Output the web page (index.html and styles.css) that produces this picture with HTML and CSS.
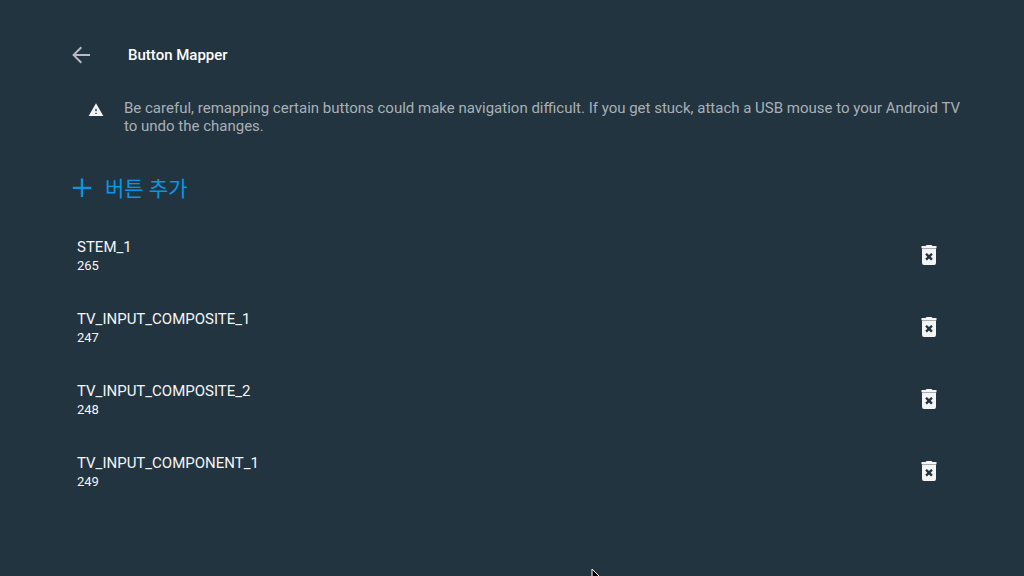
FILE: index.html
```
<!DOCTYPE html>
<html lang="ko">
<head>
    <meta charset="UTF-8">
    <meta name="viewport" content="width=device-width, initial-scale=1.0">
    <link rel="stylesheet" href="styles.css">
    <title>Button Mapper</title>
</head>
<body>
    <header class="top-bar">
        <button class="icon-button" aria-label="Back">
            <svg width="24" height="24" viewBox="0 0 24 24"><path d="M21 11H7l6-6-1.400-1.400L3.200 12l8.400 8.400L13 19l-6-6h14z"/></svg>
        </button>
        <h1>Button Mapper</h1>
    </header>
    <main>
        <div class="warning">
            <svg width="16" height="16" viewBox="0 0 24 24"><path d="M1 21h22L12 2 1 21zm12-3h-2v-2h2v2zm0-4h-2v-4h2v4z"/></svg>
            <p>Be careful, remapping certain buttons could make navigation difficult. If you get stuck, attach a USB mouse to your Android TV to undo the changes.</p>
        </div>
        <button class="add-button">
            <svg width="20" height="20" viewBox="0 0 20 20"><path d="M8.800 1.600h2.200v8.200h8.200V12H11v8H8.800v-8H.8V9.800h8z"/></svg>
            <span>버튼 추가</span>
        </button>
        <ul class="button-list">
            <li>
                <div>
                    <h2>STEM_1</h2>
                    <p>265</p>
                </div>
                <button class="icon-button" aria-label="Delete STEM_1">
                    <svg width="24" height="24" viewBox="0 0 24 24"><use href="#trash"/></svg>
                </button>
            </li>
            <li>
                <div>
                    <h2>TV_INPUT_COMPOSITE_1</h2>
                    <p>247</p>
                </div>
                <button class="icon-button" aria-label="Delete TV_INPUT_COMPOSITE_1">
                    <svg width="24" height="24" viewBox="0 0 24 24"><use href="#trash"/></svg>
                </button>
            </li>
            <li>
                <div>
                    <h2>TV_INPUT_COMPOSITE_2</h2>
                    <p>248</p>
                </div>
                <button class="icon-button" aria-label="Delete TV_INPUT_COMPOSITE_2">
                    <svg width="24" height="24" viewBox="0 0 24 24"><use href="#trash"/></svg>
                </button>
            </li>
            <li>
                <div>
                    <h2>TV_INPUT_COMPONENT_1</h2>
                    <p>249</p>
                </div>
                <button class="icon-button" aria-label="Delete TV_INPUT_COMPONENT_1">
                    <svg width="24" height="24" viewBox="0 0 24 24"><use href="#trash"/></svg>
                </button>
            </li>
        </ul>
    </main>
    <!-- Mouse pointer -->
    <svg class="pointer" width="12" height="18" viewBox="0 0 12 18"><path d="M1 1v14l3-3 2 5 2-1-2-5h5z"/></svg>
    <!-- Shared trash icon -->
    <svg width="0" height="0" class="icons">
        <symbol id="trash" viewBox="0 0 24 24">
            <path fill-rule="evenodd" d="M5 4.400V19a2 2 0 0 0 2 2h10a2 2 0 0 0 2-2V4.400H5zm3.200 6.200 1.700-1.700 2.100 2.100 2.100-2.100 1.700 1.700-2.100 2.100 2.100 2.100-1.700 1.700-2.100-2.100-2.100 2.100-1.700-1.700 2.100-2.100z"/>
            <path d="M15.500 2l-1-1h-5l-1 1h-4v2.200h15V2z"/>
        </symbol>
    </svg>
</body>
</html>
```
FILE: styles.css
```
body {
    font-family: Roboto, "Noto Sans CJK KR", sans-serif;
    background-color: #233441;
    color: #f4f5f6;
    min-height: 100vh;
    margin: 0;
    padding: 40px 64px 0 69px;
    box-sizing: border-box;
    overflow: hidden;
}

h1, h2, p {
    margin: 0;
}

svg {
    display: block;
    flex-shrink: 0;
    fill: currentColor;
}

button {
    background: none;
    border: none;
    padding: 0;
    font-family: inherit;
    cursor: pointer;
}

.icon-button {
    color: #f4f5f6;
}

.top-bar {
    display: flex;
    align-items: center;
    gap: 35px;
    height: 30px;
}

.top-bar .icon-button {
    color: #b6bcc2;
}

h1 {
    color: white;
    font-size: 15px;
    font-weight: 500;
}

.warning {
    display: flex;
    gap: 20px;
    margin-top: 29px;
    padding-left: 19px;
}

.warning svg {
    margin-top: 3px;
}

.warning p {
    color: #a9b0b5;
    font-size: 15px;
    line-height: 18px;
}

.add-button {
    display: flex;
    align-items: center;
    gap: 13px;
    height: 30px;
    margin-top: 37px;
    padding-left: 3px;
    color: #0797e6;
    font-size: 21px;
}

.button-list {
    list-style: none;
    margin: 18px 0 0;
    padding: 0 19px 0 8px;
}

.button-list li {
    display: flex;
    justify-content: space-between;
    align-items: center;
    height: 72px;
}

h2 {
    font-size: 15px;
    font-weight: 400;
    line-height: 20px;
}

.button-list p {
    font-size: 13px;
    line-height: 18px;
}

/* The pointer floats above the page */
.pointer {
    position: absolute;
    left: 591px;
    top: 568px;
    fill: black;
    stroke: white;
}

.icons {
    position: absolute;
}
```
